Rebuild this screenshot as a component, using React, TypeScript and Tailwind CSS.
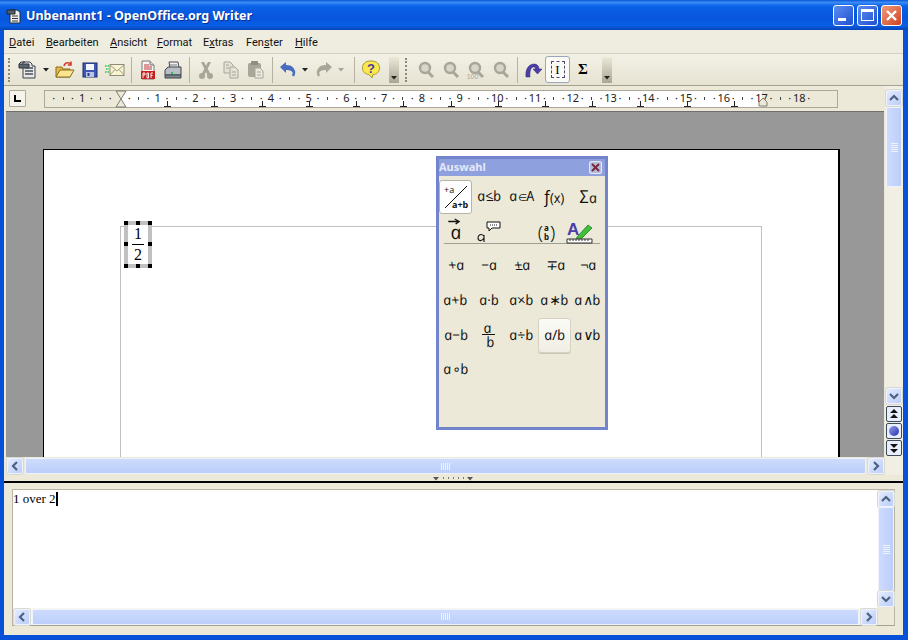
import type { ReactNode } from "react";

const UI = "font-['Noto_Sans','Open_Sans',sans-serif]";

function Chevron({ dir }: { dir: "up" | "down" | "left" | "right" }) {
  const d = {
    up: "M3 9 L7 5 L11 9",
    down: "M3 5 L7 9 L11 5",
    left: "M9 3 L5 7 L9 11",
    right: "M5 3 L9 7 L5 11",
  }[dir];
  return (
    <svg width="14" height="14" viewBox="0 0 14 14" fill="none">
      <path d={d} stroke="#4d6185" strokeWidth="2.2" />
    </svg>
  );
}

function ScrollBtn({ dir }: { dir: "up" | "down" | "left" | "right" }) {
  return (
    <div className="w-[16px] h-[16px] shrink-0 flex items-center justify-center rounded-[2px] border border-[#eef2fd] bg-gradient-to-br from-[#e3ebfe] to-[#bccdf8] shadow-[0_0_0_1px_#d8d9d0]">
      <Chevron dir={dir} />
    </div>
  );
}

function HScroll({ className }: { className: string }) {
  return (
    <div className={`flex items-center gap-[2px] ${className}`}>
      <ScrollBtn dir="left" />
      <div className="flex-1 h-[16px] rounded-[2px] border border-[#eef2fd] bg-gradient-to-b from-[#cddbfd] to-[#bccefa] flex items-center justify-center gap-[1px]">
        {[0, 1, 2, 3, 4].map((i) => (
          <span key={i} className="w-[1px] h-[7px] bg-[#eef3ff]" />
        ))}
      </div>
      <ScrollBtn dir="right" />
    </div>
  );
}

function VThumb({ className }: { className: string }) {
  return (
    <div className={`rounded-[2px] border border-[#eef2fd] bg-gradient-to-r from-[#cddbfd] to-[#bccefa] flex flex-col items-center justify-center gap-[1px] ${className}`}>
      {[0, 1, 2, 3, 4].map((i) => (
        <span key={i} className="h-[1px] w-[7px] bg-[#eef3ff]" />
      ))}
    </div>
  );
}

function Grip() {
  return (
    <div className="w-[3px] h-[24px] mx-[3px] border-l-2 border-dotted border-[#8c8a7c]" />
  );
}

function Sep() {
  return <div className="w-[1px] h-[26px] mx-[3.5px] bg-[#b5b2a2]" />;
}

function Tool({ w = 25, children }: { w?: number; children: ReactNode }) {
  return (
    <div className="h-[30px] flex items-center justify-center shrink-0" style={{ width: w }}>
      {children}
    </div>
  );
}

function Drop({ color = "#222" }: { color?: string }) {
  return (
    <svg width="7" height="4" viewBox="0 0 7 4">
      <path d="M0 0 H6 L3 3.5 Z" fill={color} />
    </svg>
  );
}

function More() {
  return (
    <div className="w-[10px] h-[26px] flex items-end justify-center pb-[3px] bg-gradient-to-b from-[#ece9d8] to-[#a9a695]">
      <Drop />
    </div>
  );
}

function NewIcon() {
  return (
    <svg width="20" height="20" viewBox="0 0 20 20">
      <path d="M6 2 H13 L15 4 V6 H18 V18 H6 Z" fill="#e8e8e8" stroke="#3a4148" />
      <path d="M2 4 H12 V8 H2 Z" fill="#5c6670" stroke="#2d3338" />
      <path d="M8 8 H16 M8 11 H16 M8 14 H16" stroke="#47505a" strokeWidth="1.4" />
      <path d="M2 4 L4 2 H8" fill="none" stroke="#2d3338" />
    </svg>
  );
}

function OpenIcon() {
  return (
    <svg width="20" height="20" viewBox="0 0 20 20">
      <path d="M1 17 V7 H7 L8 9 H15 V17 Z" fill="#e4b944" stroke="#8a6d1e" />
      <path d="M1 17 L5 10 H19 L15 17 Z" fill="#fbe690" stroke="#8a6d1e" />
      <path d="M9 6 C10 2 14 2 16 4 M16 1.5 V5 H12.8" fill="none" stroke="#d43a28" strokeWidth="1.5" />
    </svg>
  );
}

function SaveIcon() {
  return (
    <svg width="18" height="18" viewBox="0 0 18 18">
      <rect x="2" y="2" width="14" height="14" fill="#3f58b4" stroke="#1c2a6e" />
      <rect x="5" y="3" width="8" height="6" fill="#f4f6fc" />
      <rect x="5" y="11" width="8" height="5" fill="#b9c4e6" />
      <rect x="6.5" y="12" width="2" height="3" fill="#2b3c8f" />
    </svg>
  );
}

function MailIcon() {
  return (
    <svg width="20" height="16" viewBox="0 0 20 16">
      <rect x="5" y="2.5" width="14" height="11" fill="#f8f3d2" stroke="#8d8c78" />
      <path d="M5 3 L12 9 L19 3 M5 13 L10 7.5 M19 13 L14 7.5" fill="none" stroke="#a09f80" />
      <path d="M0 4 H4 M1 7 H4 M0 10 H4" stroke="#34c24a" strokeWidth="1.4" strokeDasharray="1.5 1" />
    </svg>
  );
}

function PdfIcon() {
  return (
    <svg width="16" height="20" viewBox="0 0 16 20">
      <path d="M2 1 H10 L14 5 V19 H2 Z" fill="#f6f6f6" stroke="#777" />
      <path d="M10 1 V5 H14" fill="#ddd" stroke="#777" />
      <path d="M4 5 H9 M4 7 H12 M4 9 H12" stroke="#c23b3b" strokeWidth="1" />
      <rect x="1" y="11" width="14" height="8" fill="#c8201e" />
      <path d="M3 18 V13 H5 V15 H3 M7 13 V18 H8.5 V13 H7 M11 18 V13 H13 M11 15.5 H12.6" fill="none" stroke="#fff" strokeWidth="0.9" />
    </svg>
  );
}

function PrintIcon() {
  return (
    <svg width="20" height="20" viewBox="0 0 20 20">
      <path d="M6 2 H15 L16 8 H7 Z" fill="#f2f2f2" stroke="#444c55" />
      <path d="M2 10 L5 7 H18 V15 H2 Z" fill="#b9bec4" stroke="#3c444c" />
      <path d="M2 15 H18 V18 H2 Z" fill="#7e868e" stroke="#3c444c" />
      <rect x="8" y="12" width="2" height="2" fill="#2fbf58" />
      <path d="M7 5 H14" stroke="#777" />
    </svg>
  );
}

function CutIcon() {
  return (
    <svg width="16" height="20" viewBox="0 0 16 20" fill="#a8a698">
      <path d="M3 2 L6 2 L13 15 L10 16 Z" />
      <path d="M13 2 L10 2 L3 15 L6 16 Z" />
      <circle cx="4" cy="16" r="3" />
      <circle cx="12" cy="16" r="3" />
    </svg>
  );
}

function CopyIcon() {
  return (
    <svg width="18" height="20" viewBox="0 0 18 20" fill="#e4e2d6" stroke="#a8a698">
      <path d="M2 2 H8 L11 5 V13 H2 Z" />
      <path d="M8 7 H13 L16 10 V18 H8 Z" />
      <path d="M4 5 H7 M4 8 H7 M10 12 H14 M10 15 H14" strokeWidth="1.2" />
    </svg>
  );
}

function PasteIcon() {
  return (
    <svg width="18" height="20" viewBox="0 0 18 20">
      <rect x="1" y="3" width="13" height="14" rx="2" fill="#a8a698" />
      <rect x="4" y="1" width="7" height="4" rx="1" fill="#8f8d80" />
      <path d="M8 8 H13 L16 11 V18 H8 Z" fill="#eceadf" stroke="#a8a698" />
      <path d="M10 12 H14 M10 15 H14" stroke="#a8a698" />
    </svg>
  );
}

function UndoIcon({ color, flip }: { color: string; flip?: boolean }) {
  return (
    <svg width="18" height="18" viewBox="0 0 18 18" className={flip ? "-scale-x-100" : ""}>
      <path d="M1 6 L7 1 V4 C13 4 17 7 15 14 C14 10 11 9 7 9 V12 Z" fill={color} />
      <path d="M13 8 C16 10 15 13 14 15" fill="none" stroke={color} strokeWidth="2.5" />
    </svg>
  );
}

function HelpIcon() {
  return (
    <svg width="20" height="22" viewBox="0 0 20 22">
      <path d="M10 2 C16 2 18.5 5 18.5 9 C18.5 13 15.5 15.5 12 15.5 L11 19 L8 15.5 C4 15 1.5 13 1.5 9 C1.5 5 4 2 10 2 Z" fill="#fbe84e" stroke="#a8982c" />
      <text x="10" y="13.5" textAnchor="middle" fontSize="13" fontWeight="700" fill="#4a3aa0" fontFamily="'Liberation Sans',sans-serif">?</text>
    </svg>
  );
}

function ZoomIcon({ hundred }: { hundred?: boolean }) {
  return (
    <svg width="18" height="18" viewBox="0 0 18 18">
      <circle cx="8" cy="7" r="5" fill="#d8d6c8" stroke="#a8a698" strokeWidth="2.4" />
      <path d="M11 11 L16 16" stroke="#a8a698" strokeWidth="3" />
      {hundred && (
        <text x="5.5" y="17.5" textAnchor="middle" fontSize="7" fill="#a8a698" fontFamily="'Liberation Sans',sans-serif">100</text>
      )}
    </svg>
  );
}

function RedoMathIcon() {
  return (
    <svg width="18" height="16" viewBox="0 0 18 16">
      <path d="M2 15 C1 7 5 2 10 2 C13 2 15 4 15 7 H18 L13.5 12 L9 7 H11.5 C11.5 5.5 10.8 5 9.5 5 C7 5 5.5 9 6 15 Z" fill="#4b3fa7" stroke="#2c2570" strokeWidth="0.5" />
    </svg>
  );
}

function Toolbar() {
  return (
    <div className="h-[32px] flex items-center pl-[1px] bg-gradient-to-b from-[#f3f1e6] to-[#e6e3d2] border-b border-[#a5a293]">
      <Grip />
      <Tool w={26}><NewIcon /></Tool>
      <Tool w={12}><Drop /></Tool>
      <Tool><OpenIcon /></Tool>
      <Tool><SaveIcon /></Tool>
      <Tool><MailIcon /></Tool>
      <Sep />
      <Tool><PdfIcon /></Tool>
      <Tool><PrintIcon /></Tool>
      <Sep />
      <Tool><CutIcon /></Tool>
      <Tool><CopyIcon /></Tool>
      <Tool><PasteIcon /></Tool>
      <Sep />
      <Tool w={23}><UndoIcon color="#4a6cc0" /></Tool>
      <Tool w={13}><Drop /></Tool>
      <Tool w={23}><UndoIcon color="#a8a698" flip /></Tool>
      <Tool w={13}><Drop color="#a8a698" /></Tool>
      <div className="w-[2px]" />
      <Sep />
      <div className="w-[1px]" />
      <Tool w={24}><HelpIcon /></Tool>
      <div className="w-[6px]" />
      <More />
      <div className="w-[3px]" />
      <Grip />
      <div className="w-[2px]" />
      <Tool><ZoomIcon /></Tool>
      <Tool><ZoomIcon /></Tool>
      <Tool><ZoomIcon hundred /></Tool>
      <Tool><ZoomIcon /></Tool>
      <Sep />
      <Tool w={24}><RedoMathIcon /></Tool>
      <div className="w-[25px] h-[27px] shrink-0 flex items-center justify-center rounded-[3px] border border-[#9aa6bb] bg-[#fbfaf5]">
        <div className="w-[14px] h-[17px] border border-dashed border-[#4a4a7a] flex items-center justify-center text-[13px] leading-none text-black font-['Liberation_Serif',serif]">I</div>
      </div>
      <Tool w={26}><span className="text-[15px] font-bold leading-none text-black font-['Liberation_Serif',serif]">Σ</span></Tool>
      <div className="w-[6px]" />
      <More />
    </div>
  );
}

const MENU: [string, string, string, string][] = [
  ["", "D", "atei", "w-[37px]"],
  ["", "B", "earbeiten", "w-[64px]"],
  ["", "A", "nsicht", "w-[47px]"],
  ["", "F", "ormat", "w-[46px]"],
  ["E", "x", "tras", "w-[43px]"],
  ["Fen", "s", "ter", "w-[49px]"],
  ["", "H", "ilfe", ""],
];

function MenuBar() {
  return (
    <div className="h-[24px] flex items-center pl-[5px] pt-[4px] bg-[#efede0] border-b border-[#d4d1c0] text-[11px] text-[#111] font-['Roboto',sans-serif]">
      {MENU.map(([a, u, b, m]) => (
        <span key={a + u + b} className={m}>
          {a}
          <span className="underline">{u}</span>
          {b}
        </span>
      ))}
    </div>
  );
}

function TitleBar() {
  return (
    <div className="h-[30px] shrink-0 flex items-center pl-[6px] pr-[6px] bg-[linear-gradient(180deg,#0a56d8_0%,#3a8cf5_8%,#0a62e6_20%,#0755dc_60%,#0a5fe6_85%,#0644b8_100%)]">
      <svg width="16" height="18" viewBox="0 0 16 18" className="mr-[4px] mt-[2px]">
        <path d="M4 3 H11 L14 5 V16 H4 Z" fill="#f0f0f0" stroke="#26303a" />
        <path d="M1 3 H9 V7 H1 Z" fill="#56606a" stroke="#1f262c" />
        <path d="M6 9 H12 M6 11.5 H12 M6 14 H12" stroke="#333" />
      </svg>
      <span className="pt-[3px] text-[12.5px] font-bold text-white [text-shadow:1px_1px_0_#0a2f90] whitespace-nowrap">
        Unbenannt1 - OpenOffice.org Writer
      </span>
      <div className="ml-auto flex gap-[3px]">
        <div className="w-[21px] h-[21px] rounded-[3px] border border-white bg-gradient-to-br from-[#5d8df0] to-[#1f4fd0] flex items-end pl-[4px] pb-[4px]">
          <div className="w-[8px] h-[3px] bg-white" />
        </div>
        <div className="w-[21px] h-[21px] rounded-[3px] border border-white bg-gradient-to-br from-[#5d8df0] to-[#1f4fd0] flex items-center justify-center">
          <div className="w-[13px] h-[12px] border border-t-[3px] border-white" />
        </div>
        <div className="w-[21px] h-[21px] rounded-[3px] border border-white bg-gradient-to-br from-[#ee9a7a] to-[#d0401c] flex items-center justify-center">
          <svg width="13" height="13" viewBox="0 0 13 13">
            <path d="M2 2 L11 11 M11 2 L2 11" stroke="#fff" strokeWidth="2.4" />
          </svg>
        </div>
      </div>
    </div>
  );
}

const CM = ["1", "", "1", "2", "3", "4", "5", "6", "7", "8", "9", "10", "11", "12", "13", "14", "15", "16", "17", "18"];

function Slot({ children }: { children?: ReactNode }) {
  return <span className="w-[9.45px] flex justify-center whitespace-nowrap">{children}</span>;
}

function Ruler() {
  return (
    <div className="h-[25px] flex items-center pl-[5px]">
      <div className="w-[17px] h-[17px] mr-[18px] border border-[#aca899] rounded-[1px] bg-[#f5f4ec] flex items-center justify-center">
        <div className="w-[7px] h-[7px] border-l-2 border-b-2 border-black" />
      </div>
      <div className="relative w-[794px] h-[18px] border border-[#aca899] text-[11px] text-[#222]">
        <div className="absolute left-[75px] right-[75px] top-0 bottom-0 bg-white" />
        <div className="relative h-full flex items-center pl-[4px]">
          <Slot>·</Slot>
          {CM.map((n, i) => (
            <div key={i} className="flex items-center">
              <Slot>
                <span className="w-[1px] h-[3px] bg-[#444]" />
              </Slot>
              <Slot>·</Slot>
              <Slot>{n}</Slot>
              <Slot>·</Slot>
            </div>
          ))}
        </div>
        <div className="absolute left-[99px] bottom-0 flex">
          {[0, 1, 2, 3, 4, 5, 6, 7, 8, 9, 10, 11, 12].map((i) => (
            <div key={i} className="w-[47.25px] flex justify-center">
              <svg width="7" height="6" viewBox="0 0 7 6">
                <path d="M3.5 0 V5 M0 5.5 H7" stroke="#222" />
              </svg>
            </div>
          ))}
        </div>
        <svg width="12" height="18" viewBox="0 0 12 18" className="absolute left-[70px] -top-[1px]">
          <path d="M1 1 H11 L6 9 L11 17 H1 L6 9 Z" fill="#ece9d8" stroke="#7f7d6e" />
        </svg>
        <svg width="10" height="9" viewBox="0 0 10 9" className="absolute left-[713px] bottom-0">
          <path d="M5 0 L9 4 V8 H1 V4 Z" fill="#ece9d8" stroke="#7f7d6e" />
        </svg>
      </div>
    </div>
  );
}

function Handle({ className }: { className: string }) {
  return <span className={`absolute w-[4px] h-[4px] bg-black ${className}`} />;
}

function MathObject() {
  return (
    <div className="relative w-[28px] h-[47px] ml-[2px] -mt-[6px] border-[4px] border-[#c0c0c0] bg-white flex flex-col items-center justify-center font-['Liberation_Serif',serif] text-[16px] leading-[16px] text-black">
      <span>1</span>
      <span className="w-[12px] h-[1px] bg-black my-[2px]" />
      <span>2</span>
      <Handle className="-left-[4px] -top-[4px]" />
      <Handle className="left-[8px] -top-[4px]" />
      <Handle className="-right-[4px] -top-[4px]" />
      <Handle className="-left-[4px] top-[17px]" />
      <Handle className="-right-[4px] top-[17px]" />
      <Handle className="-left-[4px] -bottom-[4px]" />
      <Handle className="left-[8px] -bottom-[4px]" />
      <Handle className="-right-[4px] -bottom-[4px]" />
    </div>
  );
}

function Sym({ children, hl }: { children?: ReactNode; hl?: boolean }) {
  return (
    <div className={`w-[33px] h-[34.6px] pb-[2px] flex items-center justify-center whitespace-nowrap ${hl ? "rounded-[3px] border border-[#d5d2c2] bg-gradient-to-b from-[#fbfbf7] to-[#f0eee4] shadow-[0_1px_0_#c9c6b4]" : ""}`}>
      <span className="inline-block italic skew-x-[11deg] text-[14px] leading-none text-[#111] font-['Open_Sans',sans-serif]">
        {children}
      </span>
    </div>
  );
}

function SelectionPanel() {
  return (
    <div className="absolute left-[430px] top-[44px] w-[172px] h-[274px] border-[3px] border-[#7184cc] bg-[#ece9d8] text-[#111]">
      <div className="h-[17px] flex items-center justify-between pr-[3px] bg-[#8fa0df]">
        <span className="text-[11px] font-bold text-[#e4e8f8]">Auswahl</span>
        <div className="w-[13px] h-[13px] rounded-[2px] border border-[#e5e8f5] bg-[#b3bcdf] flex items-center justify-center">
          <svg width="9" height="9" viewBox="0 0 9 9">
            <path d="M1 1 L8 8 M8 1 L1 8" stroke="#7a2a3a" strokeWidth="2" />
          </svg>
        </div>
      </div>
      <div className="pt-[4px]">
        <div className="flex">
          <div className="w-[33px] h-[34px] rounded-[3px] border border-[#b6b4a6] bg-white flex items-center justify-center">
            <svg width="28" height="28" viewBox="0 0 28 28">
              <path d="M3 25 L25 3" stroke="#111" />
              <text x="2" y="10" fontSize="9" fill="#111" fontFamily="'Open Sans',sans-serif">+a</text>
              <text x="10" y="25" fontSize="9" fontWeight="700" fill="#111" fontFamily="'Open Sans',sans-serif">a+b</text>
            </svg>
          </div>
          <Sym>a≤b</Sym>
          <Sym>
            a<span className="text-[10px]">∈</span>A
          </Sym>
          <Sym>
            <span className="text-[17px]">f</span>(x)
          </Sym>
          <Sym>
            <span className="text-[18px]">Σ</span>a
          </Sym>
        </div>
        <div className="flex">
          <div className="w-[33px] h-[34.6px] pb-[2px] flex items-center justify-center">
            <span className="relative inline-block italic skew-x-[11deg] text-[19px] leading-none text-[#111] font-['Open_Sans',sans-serif] pt-[3px]">
              a
              <svg width="12" height="7" viewBox="0 0 12 7" className="absolute left-0 -top-[2px]">
                <path d="M0 3.5 H10 M7 1 L11 3.5 L7 6" fill="none" stroke="#111" strokeWidth="1.3" />
              </svg>
            </span>
          </div>
          <div className="w-[33px] h-[34.6px] flex items-center justify-center">
            <svg width="26" height="24" viewBox="0 0 26 24">
              <path d="M8 16 C5 13 2 15 2 18 C2 21 6 22 8 18 V15 V22" fill="none" stroke="#111" strokeWidth="1.1" />
              <path d="M11 2 H24 V8 H16 L13 11 V8 H11 Z" fill="#fff" stroke="#111" />
              <path d="M14 5 H21" stroke="#111" strokeDasharray="1 1" />
            </svg>
          </div>
          <div className="w-[33px]" />
          <div className="w-[33px] h-[34.6px] pr-[16px] flex items-center justify-center text-[#111]">
            <span className="text-[19px] font-light leading-[20px] mr-[1px]">(</span>
            <span className="flex flex-col items-center text-[8px] leading-[9px] font-bold">
              <span>a</span>
              <span>b</span>
            </span>
            <span className="text-[19px] font-light leading-[20px] ml-[1px]">)</span>
          </div>
          <div className="w-[33px] h-[34.6px] pr-[16px] flex items-center justify-center shrink-0">
            <svg width="27" height="25" viewBox="0 0 27 25" className="shrink-0">
              <text x="1" y="16" fontSize="17" fontWeight="700" fill="#4a3fa8" fontFamily="'Liberation Sans',sans-serif">A</text>
              <path d="M11 18 L22 6 L26 9 L15 20 L10 21 Z" fill="#3fc23a" stroke="#1d6a1a" strokeWidth="0.7" />
              <path d="M1 20 H26 V24 H1 Z" fill="#fff" stroke="#333" />
              <path d="M4 20 V22 M7 20 V22 M10 20 V22 M13 20 V22 M16 20 V22 M19 20 V22 M22 20 V22" stroke="#333" />
            </svg>
          </div>
        </div>
        <div className="h-[1px] mx-[5px] -mt-[6px] mb-[5px] bg-[#a09e90]" />
        <div className="flex">
          <Sym>+a</Sym>
          <Sym>−a</Sym>
          <Sym>±a</Sym>
          <Sym>∓a</Sym>
          <Sym>¬a</Sym>
        </div>
        <div className="flex">
          <Sym>a+b</Sym>
          <Sym>a·b</Sym>
          <Sym>a×b</Sym>
          <Sym>a∗b</Sym>
          <Sym>a∧b</Sym>
        </div>
        <div className="flex">
          <Sym>a−b</Sym>
          <Sym>
            <span className="flex flex-col items-center leading-[13px]">
              <span>a</span>
              <span className="w-[13px] h-[1px] bg-[#111]" />
              <span>b</span>
            </span>
          </Sym>
          <Sym>a÷b</Sym>
          <Sym hl>a/b</Sym>
          <Sym>a∨b</Sym>
        </div>
        <div className="flex">
          <Sym>a∘b</Sym>
        </div>
      </div>
    </div>
  );
}

function NavBtn({ children }: { children: ReactNode }) {
  return (
    <div className="w-[16px] h-[16px] rounded-[2px] border border-[#3d4a5c] bg-[#e8eefb] flex items-center justify-center">
      {children}
    </div>
  );
}

function DocScroll() {
  return (
    <div className="w-[18px] shrink-0 pt-[4px] pb-[19px] flex flex-col items-center bg-[#f1efe4]">
      <ScrollBtn dir="up" />
      <VThumb className="w-[16px] h-[80px] mt-[1px]" />
      <div className="flex-1" />
      <ScrollBtn dir="down" />
      <div className="mt-[2px] flex flex-col gap-[1px]">
        <NavBtn>
          <svg width="10" height="10" viewBox="0 0 10 10">
            <path d="M1 4 L5 0 L9 4 Z M1 9 L5 5 L9 9 Z" fill="#111" />
          </svg>
        </NavBtn>
        <NavBtn>
          <span className="w-[10px] h-[10px] rounded-full bg-gradient-to-br from-[#9a9cf0] to-[#2c2fa8]" />
        </NavBtn>
        <NavBtn>
          <svg width="10" height="10" viewBox="0 0 10 10">
            <path d="M1 1 L5 5 L9 1 Z M1 6 L5 10 L9 6 Z" fill="#111" />
          </svg>
        </NavBtn>
      </div>
    </div>
  );
}

function Document() {
  return (
    <div className="relative ml-[2px] mr-[1px] h-[346px] overflow-hidden bg-[#989898] border-t border-[#6f6f6f] pl-[37px] pt-[37px]">
      <div className="w-[797px] h-[400px] bg-white border-l border-t border-black border-r-2 pl-[76px] pt-[76px]">
        <div className="w-[642px] h-[300px] border border-[#c0c0c0]">
          <div className="pl-[1px]">
            <MathObject />
          </div>
        </div>
      </div>
      <SelectionPanel />
    </div>
  );
}

function Splitter() {
  return (
    <div className="h-[8px] relative bg-[#ece9d8] border-b-2 border-black flex items-start justify-center pt-[2px] gap-[2px]">
      <Drop color="#555" />
      {[0, 1, 2, 3, 4].map((i) => (
        <span key={i} className="w-[1px] h-[2px] mx-[1px] bg-[#777]" />
      ))}
      <Drop color="#555" />
    </div>
  );
}

function CommandPane() {
  return (
    <div className="h-[152px] bg-[#ece9d8] pt-[6px] pl-[8px] pr-[8px]">
      <div className="h-[137px] flex border border-[#b8b5a5] border-b-[#a5a293] bg-white">
        <div className="flex-1 flex flex-col">
          <div className="flex-1 pt-[2px] flex items-start text-[13px] leading-[14px] text-black font-['Liberation_Serif',serif]">
            <span>1 over 2</span>
            <span className="w-[2px] h-[14px] bg-black" />
          </div>
          <HScroll className="h-[17px] pl-[1px] pr-[1px] bg-[#f7f6f0]" />
        </div>
        <div className="w-[16px] pt-[1px] flex flex-col">
          <ScrollBtn dir="up" />
          <VThumb className="flex-1 w-[16px]" />
          <ScrollBtn dir="down" />
          <div className="h-[18px] bg-[#ece9d8]" />
        </div>
      </div>
    </div>
  );
}

export default function App() {
  return (
    <div className={`w-[908px] h-[640px] flex flex-col overflow-hidden bg-[#0750d8] ${UI}`}>
      <TitleBar />
      <div className="w-[899px] ml-[4px] h-[605px] flex flex-col bg-[#ece9d8]">
        <MenuBar />
        <Toolbar />
        <div className="flex">
          <div className="flex-1 flex flex-col">
            <Ruler />
            <Document />
            <HScroll className="h-[18px] pl-[3px] pr-[1px]" />
          </div>
          <DocScroll />
        </div>
        <Splitter />
        <CommandPane />
      </div>
    </div>
  );
}
